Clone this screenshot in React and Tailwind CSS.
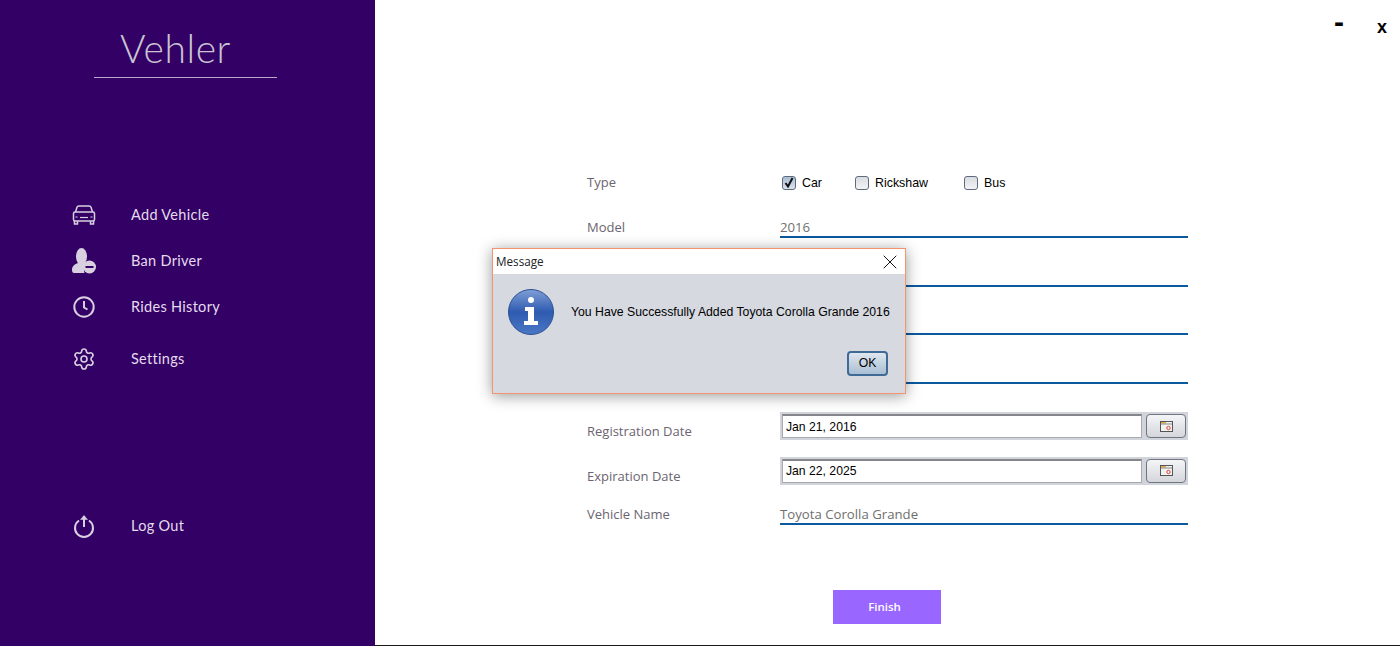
import { Settings, X } from 'lucide-react';

const NAV_FONT = "font-['Lato',sans-serif]";
const FORM_FONT = "font-['Open_Sans',sans-serif]";
const JAVA_FONT = "font-['Liberation_Sans',Arial,sans-serif]";

function CarIcon() {
    return (
        <svg width="24" height="20" viewBox="0 0 24 20" fill="none" stroke="#d8d0e0" strokeWidth="1.500">
            <path d="M3.500 7 5 2.200Q5.400 1 6.800 1H17.200Q18.600 1 19 2.200L20.500 7" />
            <rect x="1.500" y="7" width="21" height="9" rx="1.500" />
            <path d="M2.500 16v3h3v-3M18.500 16v3h3v-3" />
            <path d="M8 12.500h8" strokeWidth="1.200" />
            <path d="M3.500 12h2M18.500 12h2" strokeWidth="1.200" />
        </svg>
    );
}

function BanDriverIcon() {
    return (
        <svg width="26" height="26" viewBox="0 0 26 26">
            <ellipse cx="10.500" cy="8.500" rx="5.500" ry="8.500" fill="#d8d0e0" />
            <path d="M1 22c0-4 3-6 6-7h7c1 0 2 1 2 2-2 1-3 3-3 5 0 1 0 1.500.5 3H3c-1.500 0-2-1.500-2-3z" fill="#d8d0e0" />
            <circle cx="18.500" cy="19" r="6.500" fill="#d8d0e0" />
            <rect x="14.500" y="18" width="8" height="2" fill="#330066" />
        </svg>
    );
}

function ClockIcon() {
    return (
        <svg width="22" height="22" viewBox="0 0 22 22" fill="none" stroke="#d8d0e0">
            <circle cx="11" cy="11" r="9.700" strokeWidth="2" />
            <path d="M11 5v6.500l3.500 2" strokeWidth="2" />
        </svg>
    );
}

function PowerIcon() {
    return (
        <svg width="22" height="24" viewBox="0 0 22 24" fill="none" stroke="#d8d0e0" strokeWidth="2">
            <path d="M6 6.500a9 9 0 1 0 10 0" />
            <path d="M11 13V2" strokeWidth="2" />
            <path d="M7.500 5.500 11 1.500l3.500 4z" fill="#d8d0e0" strokeWidth="0.500" />
        </svg>
    );
}

function InfoIcon() {
    return (
        <svg width="46" height="46" viewBox="0 0 46 46">
            <defs>
                <linearGradient id="infoFill" x1="0" y1="0" x2="0" y2="1">
                    <stop offset="0" stopColor="#7f9fd6" />
                    <stop offset="0.500" stopColor="#2f5bb0" />
                    <stop offset="1" stopColor="#4a78c4" />
                </linearGradient>
            </defs>
            <circle cx="23" cy="23" r="22.500" fill="url(#infoFill)" stroke="#2a4f94" />
            <circle cx="23" cy="11" r="3" fill="#fff" />
            <path d="M17 18h9v14h4v4H16v-4h4V22h-3z" fill="#fff" />
        </svg>
    );
}

function CalendarIcon() {
    return (
        <svg width="13" height="11" viewBox="0 0 13 11">
            <rect x="0.500" y="0.500" width="12" height="10" fill="#f2f2f2" stroke="#555" />
            <rect x="1" y="1" width="5" height="1.500" fill="#e5a83b" />
            <rect x="1" y="2.500" width="11" height="1" fill="#8a8a8a" />
            <circle cx="8.500" cy="7" r="1.700" fill="none" stroke="#e0453a" />
        </svg>
    );
}

function NavItem({ icon, label, className }) {
    return (
        <div className={`flex items-center h-[26px] ${className}`}>
            <div className="w-[131px] pl-[71px] flex">
                <div className="w-[26px] flex justify-center">{icon}</div>
            </div>
            <span className={`${NAV_FONT} text-[14.500px] tracking-[0.3px] text-[#e4dcec]`}>{label}</span>
        </div>
    );
}

function Check({ label, checked, className }) {
    return (
        <div className={`flex items-center gap-[6px] ${className}`}>
            <div className={`w-[14px] h-[14px] rounded-[3px] border border-[#5f6b7c] flex items-center justify-center bg-gradient-to-b ${checked ? 'from-[#a9bdd4] to-[#dbe3ec]' : 'from-[#d9dce2] to-[#f2f3f5]'}`}>
                {checked && (
                    <svg width="10" height="11" viewBox="0 0 10 11" fill="none" stroke="#111" strokeWidth="2">
                        <path d="M1.500 6l2.500 3.500L8.500 1" />
                    </svg>
                )}
            </div>
            <span className={`${JAVA_FONT} text-[12.400px] text-black`}>{label}</span>
        </div>
    );
}

function LineField({ label, value, className }) {
    return (
        <div className={`flex ${className}`}>
            <div className={`w-[193px] ${FORM_FONT} text-[13px] text-[#6b6470] leading-[18px]`}>{label}</div>
            <div className={`w-[408px] h-full border-b-2 border-[#0b5a9e] ${FORM_FONT} text-[13.200px] text-[#6f6f6f] leading-[18px]`}>{value}</div>
        </div>
    );
}

function DateField({ label, value, className }) {
    return (
        <div className={`flex items-center ${className}`}>
            <div className={`w-[193px] pt-[11px] ${FORM_FONT} text-[13px] text-[#6b6470]`}>{label}</div>
            <div className="w-[408px] h-[28px] bg-[#d2d4dc] p-[2px] flex items-center gap-[4px]">
                <div className={`w-[360px] h-[24px] bg-white border border-[#a9a9ad] border-t-2 border-t-[#85858a] pl-[3px] flex items-center ${JAVA_FONT} text-[12.200px] text-black`}>{value}</div>
                <div className="w-[40px] h-[24px] rounded-[4px] border border-[#70757f] bg-gradient-to-b from-[#f4f5f7] to-[#d4d6dc] flex items-center justify-center">
                    <CalendarIcon />
                </div>
            </div>
        </div>
    );
}

export default function App() {
    return (
        <div className="relative flex w-[1400px] h-[646px] bg-white overflow-hidden">
            {/* Sidebar */}
            <div className="w-[375px] h-full bg-[#330066] shrink-0 flex flex-col">
                <div className="mx-[94px] w-[183px] h-[78px] border-b border-[#b9a8cc] pr-[20px] text-center">
                    <div className={`pt-[26px] ${NAV_FONT} font-light text-[39px] leading-[44px] tracking-[0.6px] text-[#c9c5d3]`}>Vehler</div>
                </div>
                <NavItem className="mt-[124px]" icon={<CarIcon />} label="Add Vehicle" />
                <NavItem className="mt-[20px]" icon={<BanDriverIcon />} label="Ban Driver" />
                <NavItem className="mt-[20px]" icon={<ClockIcon />} label="Rides History" />
                <NavItem className="mt-[26px]" icon={<Settings size={24} color="#d8d0e0" strokeWidth={1.6} />} label="Settings" />
                <NavItem className="mt-[141px]" icon={<PowerIcon />} label="Log Out" />
            </div>

            {/* Main */}
            <div className="flex-1 h-full border-b border-[#1a1a1a] flex flex-col">
                <div className="flex justify-end items-start h-[173px] pr-[13px]">
                    <span className={`${JAVA_FONT} font-bold text-[30px] leading-[20px] text-black mt-[12px] mr-[33px]`}>-</span>
                    <span className={`${JAVA_FONT} font-bold text-[18px] leading-[20px] text-black mt-[17px]`}>x</span>
                </div>
                <div className="pl-[212px] flex flex-col">
                    <div className="flex items-center h-[20px]">
                        <div className={`w-[193px] ${FORM_FONT} text-[13px] text-[#6b6470]`}>Type</div>
                        <div className="flex pl-[2px]">
                            <Check className="w-[73px]" label="Car" checked />
                            <Check className="w-[109px]" label="Rickshaw" />
                            <Check label="Bus" />
                        </div>
                    </div>
                    <LineField className="mt-[25px] h-[20px]" label="Model" value="2016" />
                    <LineField className="mt-[29px] h-[20px]" />
                    <LineField className="mt-[28px] h-[20px]" />
                    <LineField className="mt-[29px] h-[20px]" />
                    <DateField className="mt-[27px]" label="Registration Date" value="Jan 21, 2016" />
                    <DateField className="mt-[14px]" label="Expiration Date" value="Jan 22, 2025" />
                    <LineField className="mt-[19px] h-[20px]" label="Vehicle Name" value="Toyota Corolla Grande" />
                    <button className={`mt-[65px] ml-[246px] w-[108px] h-[34px] pr-[5px] bg-[#9966ff] text-white text-[11.500px] font-semibold ${FORM_FONT}`}>Finish</button>
                </div>
            </div>

            {/* Dialog */}
            <div className="absolute left-[492px] top-[248px] w-[414px] h-[146px] border border-[#f4936f] bg-[#d6d9e0] shadow-[0_2px_14px_rgba(0,0,0,0.4)] flex flex-col">
                <div className="h-[25px] bg-white flex items-center justify-between pl-[3px] pr-[3px] shrink-0">
                    <span className={`${FORM_FONT} text-[11.700px] leading-[22px] mb-[2px] text-[#222]`}>Message</span>
                    <X size={24} color="#111" strokeWidth={1} />
                </div>
                <div className="flex items-center pl-[15px] pt-[15px]">
                    <InfoIcon />
                    <span className={`ml-[17px] ${JAVA_FONT} text-[12.250px] text-black`}>You Have Successfully Added Toyota Corolla Grande 2016</span>
                </div>
                <div className="flex justify-end pr-[17px] pt-[16px]">
                    <button className={`w-[41px] h-[25px] rounded-[4px] border-2 border-[#3f6a96] bg-gradient-to-b from-[#dfe6ee] to-[#a9bfd4] ${JAVA_FONT} text-[12.200px] text-black`}>OK</button>
                </div>
            </div>
        </div>
    );
}
